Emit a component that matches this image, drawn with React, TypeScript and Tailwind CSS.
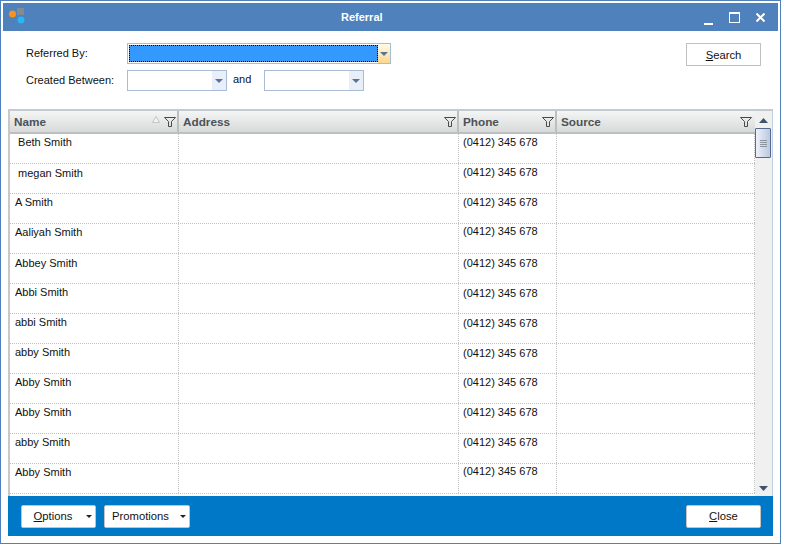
import type { ReactNode } from 'react';

const font = "font-['Liberation_Sans',Arial,sans-serif]";

const rows = [
  { name: '\u00a0Beth Smith', nameTop: 'pt-[1px]', phoneTop: 'pt-[1px]' },
  { name: '\u00a0megan Smith', nameTop: 'pt-[2px]', phoneTop: 'pt-[1px]' },
  { name: 'A Smith', nameTop: 'pt-[1px]', phoneTop: 'pt-[1px]' },
  { name: 'Aaliyah Smith', nameTop: 'pt-[1px]', phoneTop: 'pt-0' },
  { name: 'Abbey Smith', nameTop: 'pt-[2px]', phoneTop: 'pt-[2px]' },
  { name: 'Abbi Smith', nameTop: 'pt-[1px]', phoneTop: 'pt-[2px]' },
  { name: 'abbi Smith', nameTop: 'pt-[1px]', phoneTop: 'pt-[2px]' },
  { name: 'abby Smith', nameTop: 'pt-[1px]', phoneTop: 'pt-[2px]' },
  { name: 'Abby Smith', nameTop: 'pt-[1px]', phoneTop: 'pt-[1px]' },
  { name: 'Abby Smith', nameTop: 'pt-[1px]', phoneTop: 'pt-[1px]' },
  { name: 'abby Smith', nameTop: 'pt-[1px]', phoneTop: 'pt-[1px]' },
  { name: 'Abby Smith', nameTop: 'pt-[1px]', phoneTop: 'pt-0' },
];

function Funnel() {
  return (
    <svg width="12" height="10" viewBox="0 0 12 10" fill="none" stroke="#4a4a4a" strokeWidth="1">
      <path d="M0.5 0.5H11.5L7.5 4.5V9.5H4.5V4.5Z" />
    </svg>
  );
}

function DownArrow({ color = '#5a7299' }: { color?: string }) {
  return (
    <svg width="8" height="4" viewBox="0 0 8 4">
      <path d="M0 0H8L4 4Z" fill={color} />
    </svg>
  );
}

function HeaderCell({ label, sorted, border = true }: { label: string; sorted?: boolean; border?: boolean }) {
  return (
    <div className={`flex items-center pl-[4px] ${border ? 'border-r-2 border-[#bcbfbf] pr-[1px]' : 'pr-[3px]'}`}>
      <span className="flex-1 text-[11.75px] font-bold text-[#4c5257]">{label}</span>
      {sorted && (
        <svg className="mr-[4px] mb-[4px]" width="8" height="7" viewBox="0 0 8 7">
          <path d="M4 0.5L7.5 6.5H0.5Z" fill="#f4f4f4" stroke="#c4c4c4" />
        </svg>
      )}
      <Funnel />
    </div>
  );
}

function DateBox() {
  return (
    <div className="flex h-[21px] w-[100px] border border-[#a9bcd6] bg-white">
      <div className="flex-1" />
      <div className="flex w-[14px] items-center justify-center bg-[#e8eff9]">
        <DownArrow />
      </div>
    </div>
  );
}

function FooterButton({ children, width, textPad }: { children: ReactNode; width: string; textPad: string }) {
  return (
    <button className={`flex h-[23px] ${width} items-center rounded-[2px] border border-[#c4c4c4] bg-white text-[11.25px] text-[#111]`}>
      <span className={`flex-1 text-center ${textPad}`}>{children}</span>
      <span className="mr-[3px] flex w-[6px] justify-center">
        <svg width="6" height="3" viewBox="0 0 6 3">
          <path d="M0 0H6L3 3Z" fill="#222" />
        </svg>
      </span>
    </button>
  );
}

export default function App() {
  return (
    <div className={`${font} h-[544px] w-[786px] bg-white`}>
      <div className="flex h-[544px] w-[781px] flex-col border border-[#4f81bd] p-[2px]">
        {/* Title bar */}
        <div className="flex h-[28px] shrink-0 items-center bg-[#4f81bd] text-white">
          <svg className="ml-[5px] shrink-0" width="20" height="20" viewBox="0 0 20 20">
            <rect x="9" y="1" width="7" height="7" fill="#858a8e" />
            <circle cx="4.5" cy="7" r="3.5" fill="#f7931e" />
            <circle cx="13" cy="13" r="3.5" fill="#29b6f6" />
          </svg>
          <span className="ml-[313px] pt-[1px] text-[11px] font-bold">Referral</span>
          <div className="ml-auto flex items-center">
            <span className="mt-[14px] h-[2px] w-[9px] bg-white" />
            <span className="ml-[16px] mt-[1px] h-[11px] w-[11px] border border-t-2 border-white" />
            <svg className="ml-[16px] mr-[13px] mt-[1px]" width="9" height="9" viewBox="0 0 9 9" stroke="white" strokeWidth="2">
              <path d="M0.5 0.5L8.5 8.5M8.5 0.5L0.5 8.5" />
            </svg>
          </div>
        </div>

        {/* Filters */}
        <div className="flex h-[78px] shrink-0 pt-[12px] pl-[23px] pr-[17px] text-[11px] text-[#111]">
          <div className="flex flex-col">
            <div className="flex h-[21px] items-center">
              <span className="w-[101px]">Referred By:</span>
              <div className="flex h-[21px] w-[264px] border border-[#a9bcd6] bg-white">
                <div className="m-[1px] mr-0 flex-1 border border-dotted border-black bg-[#3399ff]" />
                <div className="flex w-[12px] items-center justify-center bg-gradient-to-b from-[#fffbe8] to-[#fcd88c]">
                  <DownArrow />
                </div>
              </div>
            </div>
            <div className="mt-[6px] flex h-[21px] items-center">
              <span className="w-[101px]">Created Between:</span>
              <DateBox />
              <span className="ml-[6px] mb-[2px] w-[31px]">and</span>
              <DateBox />
            </div>
          </div>
          <button className="ml-auto h-[23px] w-[75px] border border-[#c0c0c0] bg-white pt-[1px] text-[11.25px] text-[#111]">
            <span className="underline">S</span>earch
          </button>
        </div>

        {/* Grid */}
        <div className="mx-[5px] flex h-[387px] shrink-0 overflow-hidden border-t-2 border-[#c3cad2]">
          <div className="w-[747px] shrink-0 border-l-2 border-[#c8c8c8]">
            <div className="grid h-[23px] grid-cols-[169px_280px_98px_198px] border-b-2 border-[#bcbfbf] bg-gradient-to-b from-[#f4f6f6] to-[#d8dada]">
              <HeaderCell label="Name" sorted />
              <HeaderCell label="Address" />
              <HeaderCell label="Phone" />
              <HeaderCell label="Source" border={false} />
            </div>
            {rows.map((row, i) => (
              <div
                key={i}
                className="grid h-[30px] grid-cols-[169px_280px_98px_198px] border-b border-dotted border-[#c0c0c0] text-[11px] leading-[14px] text-[#111]"
              >
                <div className={`border-r border-dotted border-[#c0c0c0] pl-[5px] ${row.nameTop}`}>{row.name}</div>
                <div className="border-r border-dotted border-[#c0c0c0]" />
                <div className={`border-r border-dotted border-[#c0c0c0] pl-[4px] ${row.phoneTop}`}>(0412) 345 678</div>
                <div className="border-r border-dotted border-[#c0c0c0]" />
              </div>
            ))}
          </div>

          {/* Scrollbar */}
          <div className="flex w-[18px] shrink-0 flex-col items-center border-r border-[#bcd0e8] bg-[#f0f0f0] pr-[1px]">
            <svg className="mt-[7px]" width="9" height="5" viewBox="0 0 9 5">
              <path d="M0 5H9L4.5 0Z" fill="#3f5272" />
            </svg>
            <div className="mt-[5px] flex h-[30px] w-[16px] flex-col items-center justify-center gap-[1px] rounded-[1px] border border-[#56698f] bg-gradient-to-r from-[#eef1f8] via-[#d5dcec] to-[#bcc8de]">
              <span className="h-[1px] w-[7px] bg-[#8c93a0]" />
              <span className="h-[1px] w-[7px] bg-[#8c93a0]" />
              <span className="h-[1px] w-[7px] bg-[#8c93a0]" />
              <span className="h-[1px] w-[7px] bg-[#8c93a0]" />
            </div>
            <svg className="mb-[5px] mt-auto" width="9" height="5" viewBox="0 0 9 5">
              <path d="M0 0H9L4.5 5Z" fill="#3f5272" />
            </svg>
          </div>
        </div>

        {/* Footer */}
        <div className="mx-[5px] flex h-[40px] shrink-0 items-center bg-[#0078c8] pl-[13px] pr-[12px]">
          <FooterButton width="w-[75px]" textPad="pr-[2px]">
            <span className="underline">O</span>ptions
          </FooterButton>
          <div className="w-[8px]" />
          <FooterButton width="w-[86px]" textPad="pr-[4px]">Promotions</FooterButton>
          <button className="ml-auto h-[23px] w-[75px] rounded-[2px] border border-[#c4c4c4] bg-white pt-[1px] text-[11.25px] text-[#111]">
            <span className="underline">C</span>lose
          </button>
        </div>
      </div>
    </div>
  );
}
